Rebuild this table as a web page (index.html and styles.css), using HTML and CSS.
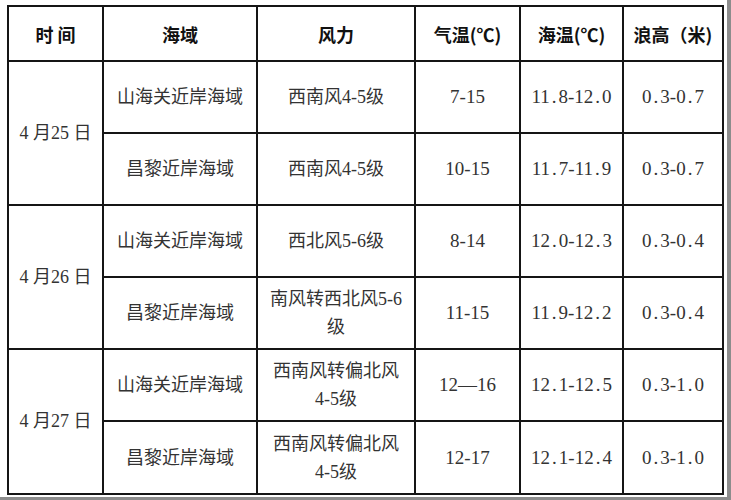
FILE: index.html
```html
<!DOCTYPE html>
<html lang="zh">
<head>
<meta charset="utf-8">
<link rel="stylesheet" href="styles.css">
</head>
<body>
<div class="page">
<table class="forecast">
<colgroup>
<col class="c-date"><col class="c-area"><col class="c-wind"><col class="c-air"><col class="c-sea"><col class="c-wave">
</colgroup>
<thead>
<tr><th>时 间</th><th>海域</th><th>风力</th><th>气温(℃)</th><th>海温(℃)</th><th>浪高（米)</th></tr>
</thead>
<tbody>
<tr><td rowspan="2" class="date">4 月25 日</td><td>山海关近岸海域</td><td>西南风4-5级</td><td class="num">7-15</td><td class="num">11<span class="dot">.</span>8-12<span class="dot">.</span>0</td><td class="num">0<span class="dot">.</span>3-0<span class="dot">.</span>7</td></tr>
<tr><td>昌黎近岸海域</td><td>西南风4-5级</td><td class="num">10-15</td><td class="num">11<span class="dot">.</span>7-11<span class="dot">.</span>9</td><td class="num">0<span class="dot">.</span>3-0<span class="dot">.</span>7</td></tr>
<tr><td rowspan="2" class="date">4 月26 日</td><td>山海关近岸海域</td><td>西北风5-6级</td><td class="num">8-14</td><td class="num">12<span class="dot">.</span>0-12<span class="dot">.</span>3</td><td class="num">0<span class="dot">.</span>3-0<span class="dot">.</span>4</td></tr>
<tr><td>昌黎近岸海域</td><td>南风转西北风5-6<br>级</td><td class="num">11-15</td><td class="num">11<span class="dot">.</span>9-12<span class="dot">.</span>2</td><td class="num">0<span class="dot">.</span>3-0<span class="dot">.</span>4</td></tr>
<tr><td rowspan="2" class="date">4 月27 日</td><td>山海关近岸海域</td><td>西南风转偏北风<br>4-5级</td><td class="num">12—16</td><td class="num">12<span class="dot">.</span>1-12<span class="dot">.</span>5</td><td class="num">0<span class="dot">.</span>3-1<span class="dot">.</span>0</td></tr>
<tr><td>昌黎近岸海域</td><td>西南风转偏北风<br>4-5级</td><td class="num">12-17</td><td class="num">12<span class="dot">.</span>1-12<span class="dot">.</span>4</td><td class="num">0<span class="dot">.</span>3-1<span class="dot">.</span>0</td></tr>
</tbody>
</table>
</div>
</body>
</html>
```

FILE: styles.css
```css
html, body {
  margin: 0;
  padding: 0;
}
body {
  background: #8c8c8c;
  width: 731px;
  height: 500px;
  overflow: hidden;
}
.page {
  background: #fff;
  width: 727px;
  height: 497px;
  padding: 5px 0 0 7px;
  box-sizing: border-box;
}
.forecast {
  border-collapse: collapse;
  table-layout: fixed;
  width: 715px;
  font-family: "Liberation Serif", "Noto Sans CJK SC", serif;
  color: #333;
}
.c-date { width: 95px; }
.c-area { width: 154px; }
.c-wind { width: 158px; }
.c-air { width: 105px; }
.c-sea { width: 103px; }
.c-wave { width: 100px; }
.forecast th,
.forecast td {
  border: 2px solid #151515;
  text-align: center;
  vertical-align: middle;
  padding: 0 2px;
}
.forecast th {
  height: 53px;
  font-family: "Noto Sans CJK SC", sans-serif;
  font-weight: bold;
  font-size: 18px;
  color: #111;
}
.forecast td {
  height: 70.1px;
  font-family: "Liberation Serif", "Noto Sans CJK SC", serif;
  font-size: 18px;
  line-height: 28px;
}
.forecast td.num {
  font-size: 19px;
}
.dot {
  margin: 0 2px;
}
.forecast td.date {
  font-size: 18px;
}
```
